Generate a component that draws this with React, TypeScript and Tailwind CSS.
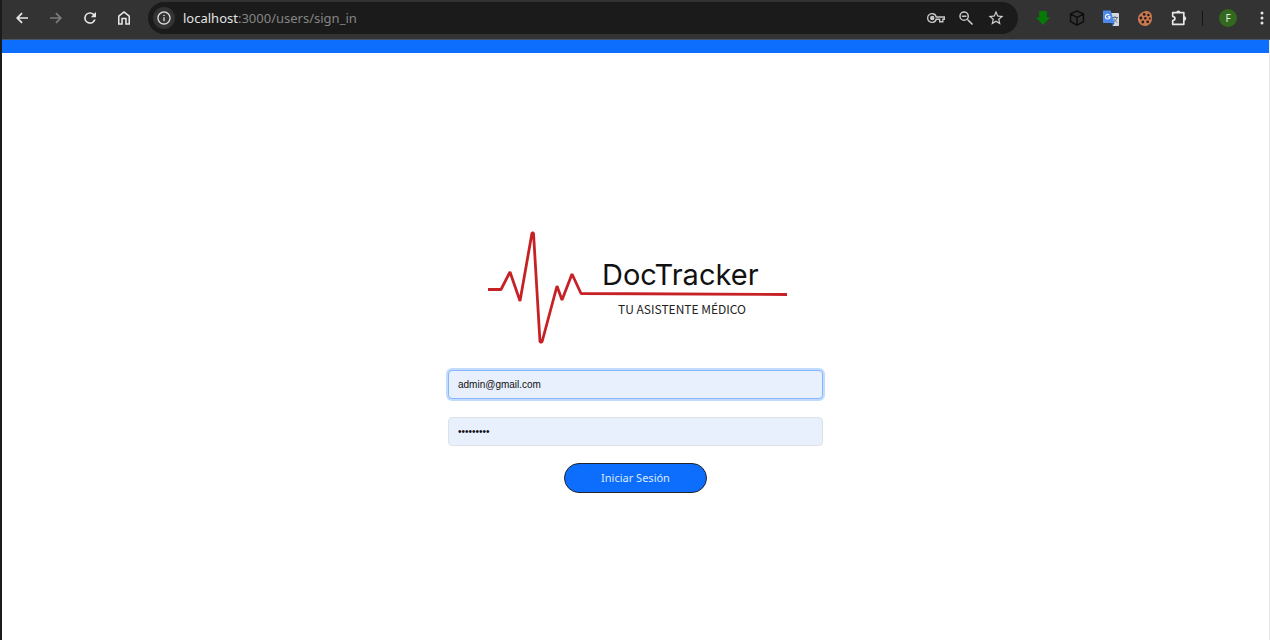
import type { ReactNode } from "react";

function IconButton({ label, children, dim = false }: { label: string; children: ReactNode; dim?: boolean }) {
  return (
    <button
      type="button"
      aria-label={label}
      className={`flex size-[18px] shrink-0 items-center justify-center ${dim ? "text-[#7b7b7b]" : "text-[#e6e6e6]"}`}
    >
      {children}
    </button>
  );
}

function Glyph({ d, className = "size-4" }: { d: string; className?: string }) {
  return (
    <svg viewBox="0 0 24 24" fill="currentColor" className={className} aria-hidden="true">
      <path d={d} />
    </svg>
  );
}

const paths = {
  back: "M21 10.700H7.800l5.200-5.200L11.200 3.700 3 12l8.200 8.300 1.800-1.800-5.200-5.200H21z",
  forward: "M3 10.700h13.200l-5.200-5.200 1.800-1.800L21 12l-8.200 8.300-1.800-1.800 5.200-5.200H3z",
  reload:
    "M18.2 5.8A8.7 8.7 0 0 0 12 3.2 8.8 8.8 0 1 0 20.5 14.3H17.9A6.3 6.3 0 1 1 12 5.7c1.7 0 3.3.7 4.4 1.9L13.3 10.7H21V3z",
  home: "M12 1.5 3 8.6V22h7.2v-8h3.6v8H21V8.6zM18.7 19.7h-2.6v-8H7.9v8H5.3V9.7L12 4.4l6.7 5.3z",
  info: "M11 7h2v2h-2zM11 11h2v6h-2zM12 2C6.5 2 2 6.500 2 12s4.500 10 10 10 10-4.500 10-10S17.500 2 12 2zm0 18c-4.400 0-8-3.600-8-8s3.600-8 8-8 8 3.600 8 8-3.600 8-8 8z",
  key: "M22 18h-6v-3.500h-2.900A6.800 6.800 0 1 1 13.100 9.500H24v5h-2V18zm-4.200-2h2.400v-3.500h2v-1h-10.600l-.3-.8a4.900 4.900 0 1 0 0 2.600l.3-.8h6.200zM7 15a3 3 0 1 1 0-6 3 3 0 0 1 0 6z",
  zoomOut:
    "M15.500 14h-.79l-.28-.27A6.470 6.470 0 0 0 16 9.500 6.500 6.500 0 1 0 9.500 16c1.610 0 3.090-.59 4.230-1.570l.27.28v.79l6 5.990L21.490 20zm-6 0a4.500 4.500 0 1 1 0-9 4.500 4.500 0 0 1 0 9zM6.500 8.500h6v2h-6z",
  star: "m22 9.240-7.190-.62L12 2 9.190 8.630 2 9.240l5.460 4.730L5.820 21 12 17.270 18.180 21l-1.630-7.030zM12 15.400l-3.760 2.270 1-4.280-3.320-2.880 4.380-.38L12 6.100l1.710 4.040 4.380.38-3.320 2.880 1 4.280z",
};

function DownloadIcon() {
  return (
    <svg viewBox="0 0 16 16" className="size-4" aria-hidden="true">
      <path d="M4.200 1h7.600v6.500H15L8 15 1 7.500h3.200z" fill="#067a06" />
    </svg>
  );
}

function CubeIcon() {
  return (
    <svg viewBox="0 0 16 16" className="size-4" fill="none" stroke="#0d0d0d" strokeWidth="1.400" strokeLinejoin="round" aria-hidden="true">
      <path d="M8 .9 14.500 4v7.700L8 15.200l-6.500-3.500V4zM1.500 4.200 8 7.300l6.500-3.100M8 7.300v7.600" />
    </svg>
  );
}

function TranslateIcon() {
  return (
    <svg viewBox="0 0 16 16" className="size-4" aria-hidden="true">
      <path d="M6 3h9.200c.5 0 .8.300.8.800v11.400c0 .5-.3.800-.8.800H9.800z" fill="#d5d8dc" />
      <path d="M9 7.500h6M12 6v1.500m2 0c-.5 2.500-2 4-4 5m.8-3.800c.8 1.900 2 3 3.600 3.800" stroke="#60777c" strokeWidth="1" fill="none" />
      <path d="M1 .5h6.700L11.500 13H1c-.6 0-1-.4-1-1V1.500c0-.6.400-1 1-1z" fill="#4d88ed" />
      <path d="M8.300 13h3.200l-1.700 3z" fill="#275bb8" />
      <path d="M6.300 5A2.300 2.300 0 1 0 7 6.900H4.800" stroke="#fff" strokeWidth="1.100" fill="none" />
    </svg>
  );
}

function CookieIcon() {
  return (
    <svg viewBox="0 0 16 16" className="size-4" aria-hidden="true">
      <path d="M8 1.200c1.500-.5 3-.2 4.300.6 1.600 1 2.600 2.800 2.600 4.700v1.800A7 7 0 1 1 3.200 3.800C4.500 2.600 6 1.900 8 1.200z" fill="#c87950" />
      <g fill="#2b1d18">
        <circle cx="7.200" cy="4.400" r="1.400" />
        <circle cx="3.900" cy="8" r="1.400" />
        <circle cx="8.300" cy="8.300" r="1.300" />
        <circle cx="5.800" cy="12" r="1.400" />
        <circle cx="10.700" cy="11.800" r="1.400" />
        <circle cx="11.400" cy="5" r="1.300" />
        <circle cx="12.800" cy="8.500" r="1" />
      </g>
    </svg>
  );
}

function PuzzleIcon() {
  return (
    <svg viewBox="0 0 16 16" className="size-4" aria-hidden="true">
      <path
        d="M1.700 2.700h11.100v11.600H1.700v-3.600c3-.6 3-3.800 0-4.400z"
        fill="none"
        stroke="currentColor"
        strokeWidth="1.700"
        strokeLinejoin="round"
      />
      <path d="M5.300 2.500a2 2 0 0 1 4 0zM13 6.300a2.200 2.200 0 0 1 0 4.400z" fill="currentColor" />
    </svg>
  );
}

function BrowserBar() {
  return (
    <header className="flex h-10 items-start border-b border-[#4b5563] bg-[#333333] pt-0.5">
      <div className="flex h-8 min-w-0 flex-1 items-center">
        <nav aria-label="Navegador" className="flex shrink-0 items-center gap-4 pr-[15px] pl-[11px]">
          <IconButton label="Atrás"><Glyph d={paths.back} /></IconButton>
          <IconButton label="Adelante" dim><Glyph d={paths.forward} /></IconButton>
          <IconButton label="Recargar"><Glyph d={paths.reload} /></IconButton>
          <IconButton label="Inicio"><Glyph d={paths.home} /></IconButton>
        </nav>
        <div className="flex h-8 min-w-0 flex-1 items-center rounded-full bg-[#1b1b1b] pr-[13px] pl-[5px]">
          <button
            type="button"
            aria-label="Información del sitio"
            className="flex size-[22px] shrink-0 items-center justify-center rounded-full bg-[#333333] text-[#dcdcdc]"
          >
            <Glyph d={paths.info} />
          </button>
          <p className="min-w-0 flex-1 truncate pl-2 font-['Noto_Sans',sans-serif] text-[13px] leading-5 text-[#858585]">
            <span className="text-[#e3e3e3]">localhost</span>:3000/users/sign_in
          </p>
          <div className="flex items-center gap-3">
            <IconButton label="Contraseñas"><Glyph d={paths.key} className="size-[18px] text-[#c7c7c7]" /></IconButton>
            <IconButton label="Alejar"><Glyph d={paths.zoomOut} className="size-[18px] text-[#c7c7c7]" /></IconButton>
            <IconButton label="Favoritos"><Glyph d={paths.star} className="size-[18px] text-[#d0d0d0]" /></IconButton>
          </div>
        </div>
        <div className="flex shrink-0 items-center gap-4 pl-4">
          <IconButton label="Descargas"><DownloadIcon /></IconButton>
          <IconButton label="Paquetes"><CubeIcon /></IconButton>
          <IconButton label="Traductor"><TranslateIcon /></IconButton>
          <IconButton label="Cookies"><CookieIcon /></IconButton>
          <IconButton label="Extensiones"><PuzzleIcon /></IconButton>
        </div>
        <span className="mr-4 ml-[14px] h-[15px] w-px shrink-0 bg-[#151515]" />
        <button
          type="button"
          aria-label="Perfil"
          className="flex size-[18px] shrink-0 items-center justify-center rounded-full bg-[#33691e] font-['Noto_Sans',sans-serif] text-[10px] text-[#e4ecdf]"
        >
          F
        </button>
        <button type="button" aria-label="Menú" className="ml-[17px] flex w-4 shrink-0 justify-center text-[#e6e6e6]">
          <svg viewBox="0 0 4 14" className="h-[14px] w-1" fill="currentColor" aria-hidden="true">
            <circle cx="2" cy="2" r="1.500" />
            <circle cx="2" cy="7" r="1.500" />
            <circle cx="2" cy="12" r="1.500" />
          </svg>
        </button>
      </div>
    </header>
  );
}

function Logo() {
  return (
    <svg viewBox="0 0 303 170" className="h-[170px] w-[303px]" role="img" aria-label="DocTracker, tu asistente médico">
      <path
        d="M4 89.500h13l9-17.500 10 29L48 33h1.500L56 142h2l15-56 5 14 10-26 9 19.500 206 1"
        fill="none"
        stroke="#c62226"
        strokeWidth="2.800"
        strokeLinejoin="bevel"
      />
      <text x="118" y="85" fill="#111111" className="font-['Inter',sans-serif] text-[29px]">DocTracker</text>
      <text x="134" y="114" fill="#222222" className="font-['Noto_Sans_CJK_SC',sans-serif] text-[12px]">TU ASISTENTE MÉDICO</text>
    </svg>
  );
}

export default function App() {
  return (
    <div className="flex min-h-screen flex-col border-l-2 border-[#1b1b1b] bg-white">
      <BrowserBar />
      <div className="flex flex-1 flex-col border-r border-[#e9e9e9]">
        <div className="h-[13px] bg-[#0d6efd]" />
        <main className="flex flex-1 items-center justify-center">
          <form className="flex w-[375px] max-w-full flex-col items-center" onSubmit={(e) => e.preventDefault()}>
            <Logo />
            <input
              type="email"
              aria-label="Correo electrónico"
              defaultValue="admin@gmail.com"
              className="h-[29px] w-full rounded-sm border border-[#86b7fe] bg-[#e8f0fe] px-[9px] font-['Liberation_Sans',sans-serif] text-[10px] text-[#111111] ring-2 ring-[#c2dbfe] outline-none"
            />
            <input
              type="password"
              aria-label="Contraseña"
              defaultValue="123456789"
              className="mt-[18px] h-[29px] w-full rounded-sm border border-[#dee2e6] bg-[#e8f0fe] px-[9px] font-['Liberation_Sans',sans-serif] text-[10px] text-[#111111] outline-none"
            />
            <button
              type="submit"
              className="mt-[17px] h-[30px] w-[143px] rounded-full border border-[#212529] bg-[#0d6efd] font-['Noto_Sans',sans-serif] text-[11px] text-[#dce9ff]"
            >
              Iniciar Sesión
            </button>
          </form>
        </main>
      </div>
    </div>
  );
}
